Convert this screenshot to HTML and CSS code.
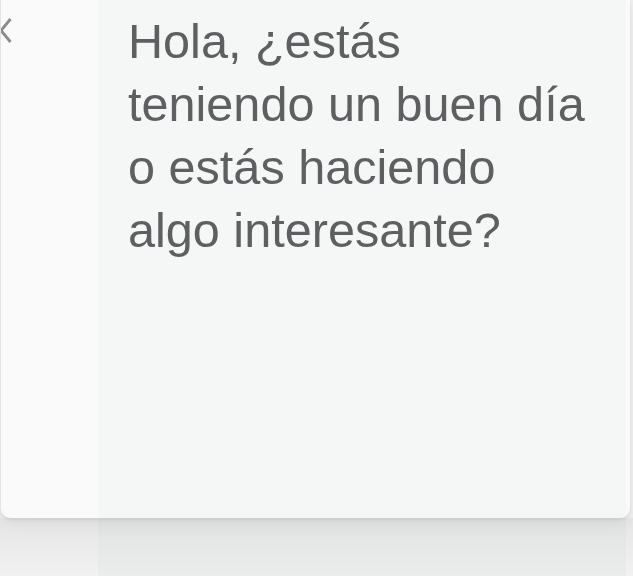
FILE: index.html
```html
<!DOCTYPE html>
<html lang="es">
<head>
<meta charset="utf-8">
<link rel="stylesheet" href="styles.css">
</head>
<body>
<div class="page">
  <div class="card">
    <div class="side">
      <svg class="chev" width="12" height="26" viewBox="0 0 12 26"><path d="M10.5 1 L1 12.5 L10.5 24" fill="none" stroke="#8a8b8c" stroke-width="2.8"/></svg>
    </div>
    <div class="panel">
      <p class="msg">Hola, ¿estás teniendo un buen día o estás haciendo algo interesante?</p>
    </div>
  </div>
  <div class="under">
    <div class="strip"></div>
  </div>
</div>
</body>
</html>
```
FILE: styles.css
```css
html, body {
  margin: 0;
  padding: 0;
}
body {
  background: #efefef;
  width: 633px;
  height: 576px;
  overflow: hidden;
  font-family: "Liberation Sans", Arial, sans-serif;
}
.page {
  position: relative;
  height: 576px;
}
.card {
  position: relative;
  z-index: 1;
  display: flex;
  width: 630px;
  height: 518px;
  box-sizing: border-box;
  background: #fafafa;
  border-left: 1px solid #e3e3e3;
  border-radius: 0 0 10px 10px;
  box-shadow: 0 2px 3px rgba(0,0,0,0.07), 0 6px 18px rgba(0,0,0,0.05);
  overflow: hidden;
}
.side {
  width: 97px;
  flex: none;
  padding-top: 18px;
  box-sizing: border-box;
}
.chev {
  display: block;
  margin-left: -1px;
}
.panel {
  width: 528px;
  flex: none;
  background: #f5f6f6;
  padding: 10px 0 0 30px;
  box-sizing: border-box;
}
.msg {
  margin: 0;
  font-size: 48.6px;
  line-height: 63px;
  color: #5e5f60;
  width: 468px;
}
.under {
  height: 58px;
  background: linear-gradient(#e6e6e6, #f1f1f1);
}
.strip {
  margin-left: 98px;
  width: 528px;
  height: 58px;
  background: linear-gradient(#e1e2e2, #ebecec);
}
```
